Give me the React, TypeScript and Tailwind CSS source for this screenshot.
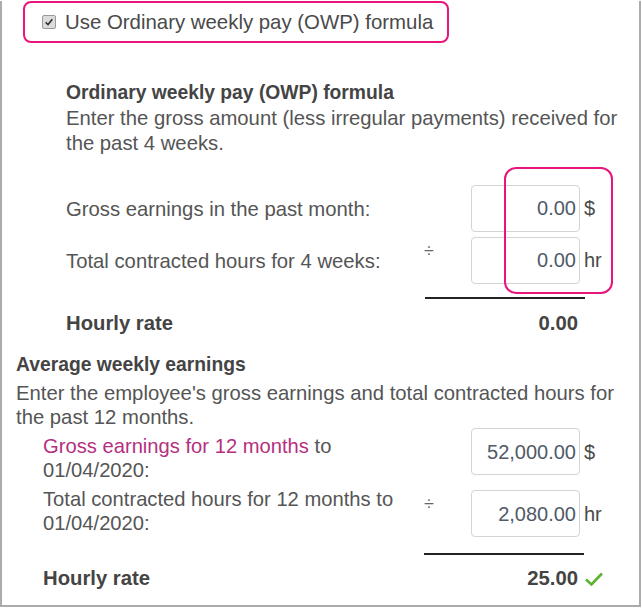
import React from "react"

const font = { fontFamily: '"Liberation Sans", Arial, sans-serif' }

function Amount({ value }: { value: string }) {
  return (
    <div className="flex h-[47px] w-[109px] shrink-0 items-center justify-end rounded-[4px] border border-[#d4d4d4] bg-white pr-[3px] text-[20px] text-[#4f5a68]">
      {value}
    </div>
  )
}

function Row({ label, divide, value, unit, labelClass }: { label: React.ReactNode; divide?: boolean; value: string; unit: string; labelClass: string }) {
  return (
    <div className="flex items-start">
      <div className={`flex-1 ${labelClass}`}>{label}</div>
      <div className="h-[24px] w-[61px] shrink-0 pl-[14px] pt-[2px] text-[18px] leading-[24px] text-[#666]">{divide ? "÷" : ""}</div>
      <Amount value={value} />
      <div className="w-[37px] shrink-0 self-center pl-[4px] text-[20px] text-[#4a4a4a]">{unit}</div>
    </div>
  )
}

export default function App() {
  return (
    <div style={font} className="h-[606px] w-[641px] border-x-2 border-b-2 border-[#ababab] bg-white leading-[25px] text-[#555]">
      <div className="ml-[21px] mt-[1px] flex h-[42px] w-[426px] items-center rounded-[8px] border-2 border-[#e8157c] pl-[17px]">
        <span className="flex h-[14px] w-[14px] items-center justify-center rounded-[2px] border border-[#9a9a9a] bg-[#dcdcdc]">
          <svg viewBox="0 0 12 12" className="h-[10px] w-[10px]">
            <path d="M2 6.5 L4.8 9 L10 2.8" fill="none" stroke="#333" strokeWidth="2" />
          </svg>
        </span>
        <span className="ml-[9px] text-[20.4px] text-[#4a4a4a]">Use Ordinary weekly pay (OWP) formula</span>
      </div>

      <div className="ml-[64px] mr-[22px] mt-[37px]">
        <div className="text-[19.3px] font-bold text-[#444]">Ordinary weekly pay (OWP) formula</div>
        <div className="mt-[1px] w-[568px] text-[20.3px]">
          Enter the gross amount (less irregular payments) received for the past 4 weeks.
        </div>

        <div className="relative mt-[29px] flex flex-col gap-[5px] text-[20.3px]">
          <Row labelClass="self-center pt-[2px]" label="Gross earnings in the past month:" value="0.00" unit="$" />
          <Row labelClass="self-center pt-[2px]" label="Total contracted hours for 4 weeks:" divide value="0.00" unit="hr" />
          <div className="absolute left-[438px] top-[-18px] h-[127px] w-[109px] rounded-[12px] border-2 border-[#e8157c]" />
        </div>

        <div className="ml-[359px] mt-[13px] h-[2px] w-[160px] bg-[#222]" />

        <div className="mt-[12px] flex text-[20.3px] font-bold text-[#444]">
          <div className="flex-1">Hourly rate</div>
          <div className="mr-[39px]">0.00</div>
        </div>
      </div>

      <div className="ml-[14px] mr-[22px] mt-[16px]">
        <div className="text-[19.3px] font-bold text-[#444]">Average weekly earnings</div>
        <div className="mt-[4px] text-[20.3px] leading-[24px]">
          Enter the employee's gross earnings and total contracted hours for the past 12 months.
        </div>

        <div className="ml-[27px] mt-[-1px] flex flex-col gap-[15px] text-[20.2px] leading-[24px]">
          <Row
            labelClass="mt-[6px] mb-[-7px]"
            label={
              <>
                <div>
                  <span className="text-[#b52f7f]">Gross earnings for 12 months</span>
                  <span> to</span>
                </div>
                <div>01/04/2020:</div>
              </>
            }
            value="52,000.00"
            unit="$"
          />
          <Row labelClass="mt-[-3px]" label="Total contracted hours for 12 months to 01/04/2020:" divide value="2,080.00" unit="hr" />
        </div>

        <div className="ml-[408px] mt-[16px] h-[2px] w-[160px] bg-[#222]" />

        <div className="ml-[27px] mt-[11px] flex items-center text-[20.3px] font-bold text-[#444]">
          <div className="flex-1">Hourly rate</div>
          <div>25.00</div>
          <svg viewBox="0 0 20 16" className="ml-[6px] mr-[13px] h-[16px] w-[20px]">
            <path d="M2 8.5 L7.5 13.5 L18 2.5" fill="none" stroke="#5cb32e" strokeWidth="2.6" />
          </svg>
        </div>
      </div>
    </div>
  )
}
